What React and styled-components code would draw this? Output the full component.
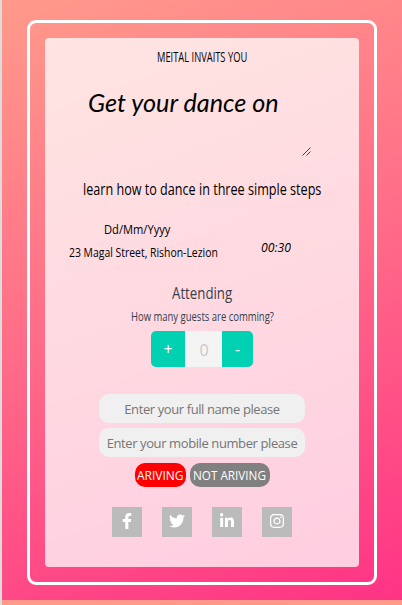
import React, { useLayoutEffect, useRef, useState } from 'react';
import styled, { createGlobalStyle } from 'styled-components';
import { FaFacebookF, FaTwitter, FaLinkedinIn, FaInstagram } from 'react-icons/fa';

const GlobalStyle = createGlobalStyle`
  * { box-sizing: border-box; }
  body {
    margin: 0;
    background: #ff9a8b;
    font-family: "Open Sans", "Noto Sans", sans-serif;
    color: #000;
  }
`;

const Page = styled.main`
  height: 605px;
  overflow: hidden;
  padding-bottom: 5px;
  border-left: 2px solid #dcdcdc;
`;

const Backdrop = styled.div`
  height: 600px;
  padding: 20px 25px 15px;
  background: linear-gradient(160deg, #ff9a8b 0%, #ff6a88 50%, #ff3385 100%);
`;

const Frame = styled.section`
  height: 565px;
  padding: 15px;
  border: 3px solid #fff;
  border-radius: 9px;
`;

const Card = styled.div`
  height: 529px;
  display: flex;
  flex-direction: column;
  align-items: center;
  border-radius: 4px;
  background: rgba(255, 255, 255, 0.75);
`;

const FitBox = styled.span`
  display: block;
  flex: none;
  width: ${(p) => p.$width}px;
  white-space: nowrap;
`;

const FitInner = styled.span`
  display: inline-block;
  transform-origin: 0 50%;
`;

/* Condenses a line of text horizontally to the given width. */
function Fit({ width, children }) {
  const ref = useRef(null);
  const [scale, setScale] = useState(1);
  useLayoutEffect(() => {
    setScale(width / ref.current.offsetWidth);
  }, [width, children]);
  return (
    <FitBox $width={width}>
      <FitInner ref={ref} style={{ transform: `scaleX(${scale})` }}>{children}</FitInner>
    </FitBox>
  );
}

const Host = styled.h2`
  margin: 9px 0 0;
  height: 20px;
  font: 400 14px/20px "Open Sans", sans-serif;
`;

const TitleBox = styled.div`
  width: 223px;
  height: 76px;
  margin: 13px 5px 0 0;
  display: flex;
  justify-content: space-between;
  align-items: flex-end;
`;

const Title = styled.h1`
  margin: 0;
  align-self: flex-start;
  font: italic 400 26px/44px "Satisfy", "Lato", cursive;
`;

const Grip = styled.svg`
  width: 9px;
  height: 9px;
  display: block;
`;

const Subtitle = styled.p`
  margin: 21px 0 0;
  height: 24px;
  font-size: 17px;
  line-height: 24px;
`;

const Details = styled.div`
  width: 314px;
  height: 50px;
  margin-top: 17px;
  padding: 0 68px 0 24px;
  display: flex;
  justify-content: space-between;
`;

const Place = styled.div`
  display: flex;
  flex-direction: column;
  align-items: center;
  font-size: 13px;
  line-height: 23px;
`;

const DateLine = styled.div`
  padding-right: 13px;
`;

const Time = styled.div`
  padding-top: 18px;
  font: italic 400 13px/23px "Open Sans", sans-serif;
`;

const Attending = styled.h3`
  margin: 13px 0 0;
  height: 24px;
  font-size: 17px;
  font-weight: 400;
  line-height: 24px;
  color: #363e4a;
`;

const Question = styled.p`
  margin: 2px 0 0;
  height: 20px;
  font-size: 12px;
  line-height: 20px;
  color: #363e4a;
`;

const Counter = styled.div`
  height: 36px;
  margin-top: 4px;
  display: flex;
  border-radius: 5px;
  overflow: hidden;
`;

const StepButton = styled.button`
  width: ${(p) => p.$width}px;
  padding: 0;
  border: 0;
  background: #00d1b2;
  color: #fff;
  font: 400 16px/36px "Open Sans", sans-serif;
`;

const Count = styled.output`
  width: 37px;
  padding-left: 1px;
  background: #f4f4f4;
  color: #c8c8c8;
  text-align: center;
  font: 400 16px/38px "Open Sans", sans-serif;
`;

const Fields = styled.form`
  margin-top: 27px;
  display: flex;
  flex-direction: column;
  gap: 5px;
`;

const Field = styled.input`
  width: 206px;
  height: 29px;
  padding: 1px 0 0;
  border: 0;
  border-radius: 10px;
  background: #f0f0f0;
  text-align: center;
  font: 400 13px "Open Sans", sans-serif;
  letter-spacing: -0.4px;
  &::placeholder { color: #757575; opacity: 1; }
`;

const Replies = styled.div`
  margin-top: 6px;
  display: flex;
  gap: 4px;
`;

const Reply = styled.button`
  height: 24px;
  padding: 0 ${(p) => p.$pad}px;
  border: 0;
  border-radius: 10px;
  background: ${(p) => p.$color};
  color: #fff;
  font: 400 13px/24px "Open Sans", sans-serif;
`;

const Socials = styled.nav`
  margin-top: 20px;
  display: flex;
  gap: 20px;
`;

const Social = styled.a`
  width: 30px;
  height: 30px;
  padding-bottom: 2px;
  display: grid;
  place-items: center;
  background: #bbb;
  color: #fff;
  svg { display: block; width: 16px; height: 16px; }
`;

const networks = [
  { name: 'Facebook', Icon: FaFacebookF },
  { name: 'Twitter', Icon: FaTwitter },
  { name: 'LinkedIn', Icon: FaLinkedinIn },
  { name: 'Instagram', Icon: FaInstagram },
];

export default function App() {
  return (
    <Page>
      <GlobalStyle />
      <Backdrop>
        <Frame>
          <Card>
            <Host><Fit width={90}>MEITAL INVAITS YOU</Fit></Host>
            <TitleBox>
              <Title><Fit width={191}>Get your dance on</Fit></Title>
              <Grip viewBox="0 0 9 9" stroke="#444" strokeWidth="1">
                <path d="M0.5 8.5 8.5 0.5M4.5 8.5 8.5 4.5" />
              </Grip>
            </TitleBox>
            <Subtitle><Fit width={238}>learn how to dance in three simple steps</Fit></Subtitle>
            <Details>
              <Place>
                <DateLine><Fit width={66}>Dd/Mm/Yyyy</Fit></DateLine>
                <Fit width={149}>23 Magal Street, Rishon-Lezion</Fit>
              </Place>
              <Time><Fit width={30}>00:30</Fit></Time>
            </Details>
            <Attending><Fit width={60}>Attending</Fit></Attending>
            <Question><Fit width={143}>How many guests are comming?</Fit></Question>
            <Counter>
              <StepButton $width={34}>+</StepButton>
              <Count>0</Count>
              <StepButton $width={31}>-</StepButton>
            </Counter>
            <Fields>
              <Field placeholder="Enter your full name please" />
              <Field placeholder="Enter your mobile number please" />
            </Fields>
            <Replies>
              <Reply $color="#f00" $pad={2}><Fit width={47}>ARIVING</Fit></Reply>
              <Reply $color="#808080" $pad={3.5}><Fit width={73}>NOT ARIVING</Fit></Reply>
            </Replies>
            <Socials>
              {networks.map(({ name, Icon }) => (
                <Social key={name} aria-label={name}><Icon /></Social>
              ))}
            </Socials>
          </Card>
        </Frame>
      </Backdrop>
    </Page>
  );
}
